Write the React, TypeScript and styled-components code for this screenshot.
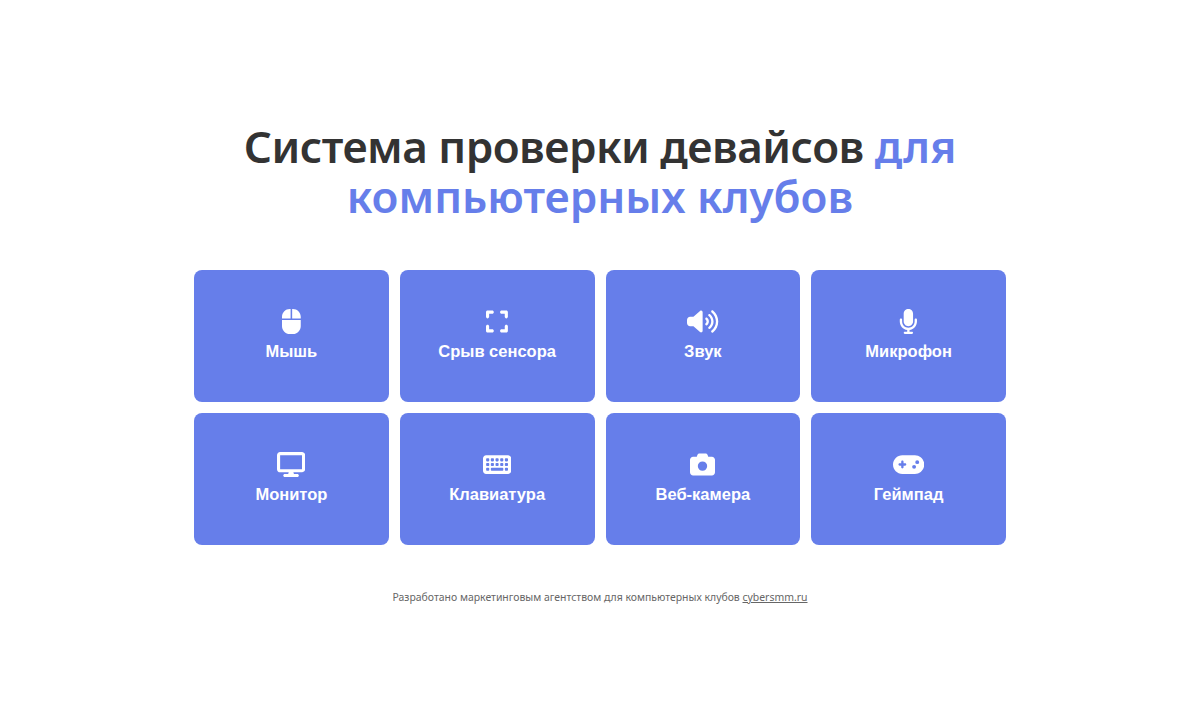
import React from "react";
import styled, { createGlobalStyle } from "styled-components";
import {
  FaComputerMouse,
  FaExpand,
  FaVolumeHigh,
  FaMicrophone,
  FaKeyboard,
  FaCamera,
  FaGamepad,
} from "react-icons/fa6";

const Global = createGlobalStyle`
  html, body { margin: 0; padding: 0; background: #fff; }
  body { font-family: "Noto Sans", "Open Sans", sans-serif; }
`;

const Page = styled.main`
  min-height: 710px;
  display: flex;
  flex-direction: column;
  align-items: center;
  padding-top: 121px;
  box-sizing: border-box;
`;

const Title = styled.h1`
  width: 812px;
  margin: 0 0 49px;
  text-align: center;
  font-family: "Noto Sans", sans-serif;
  font-size: 44px;
  font-weight: 600;
  line-height: 50px;
  color: #333;
`;

const Lead = styled.span`
  letter-spacing: -0.5px;
`;

const Accent = styled.span`
  color: #667eea;
`;

const Grid = styled.div`
  width: 812px;
  display: grid;
  grid-template-columns: repeat(4, 1fr);
  grid-auto-rows: 132px;
  gap: 11px;
`;

const Card = styled.a`
  display: flex;
  flex-direction: column;
  align-items: center;
  justify-content: center;
  gap: 5px;
  border-radius: 8px;
  background: #667eea;
  color: #fff;
  text-decoration: none;
  box-sizing: border-box;
`;

const IconSlot = styled.span<{ $width: number }>`
  height: 25px;
  display: flex;
  align-items: center;
  justify-content: center;

  svg {
    width: ${(p) => p.$width}px;
    height: 25px;
  }
`;

const Label = styled.span`
  font-family: "Liberation Sans", Arial, sans-serif;
  font-size: 16.5px;
  font-weight: 700;
  line-height: 24px;
`;

const Footer = styled.p`
  margin: 44px 0 0;
  font-family: "Noto Sans", sans-serif;
  font-size: 10.45px;
  line-height: 16px;
  color: #666;
  text-align: center;
`;

const FooterLink = styled.a`
  color: #666;
  text-decoration: underline;
`;

const MonitorIcon = () => (
  <svg viewBox="0 0 576 512" fill="currentColor" aria-hidden="true">
    <path d="M64 0C28.7 0 0 28.7 0 64V352c0 35.3 28.7 64 64 64H240l-10.7 32H160c-17.7 0-32 14.3-32 32s14.3 32 32 32H416c17.7 0 32-14.3 32-32s-14.3-32-32-32H346.7L336 416H512c35.3 0 64-28.7 64-64V64c0-35.3-28.7-64-64-64H64zM512 64V352H64V64H512z" />
  </svg>
);

const items: [string, React.ReactNode, number][] = [
  ["Мышь", <FaComputerMouse />, 18.75],
  ["Срыв сенсора", <FaExpand />, 21.875],
  ["Звук", <FaVolumeHigh />, 31.25],
  ["Микрофон", <FaMicrophone />, 18.75],
  ["Монитор", <MonitorIcon />, 28.125],
  ["Клавиатура", <FaKeyboard />, 28.125],
  ["Веб-камера", <FaCamera />, 25],
  ["Геймпад", <FaGamepad />, 31.25],
];

export default function App() {
  return (
    <Page>
      <Global />
      <Title>
        <Lead>Система проверки девайсов </Lead>
        <Accent>для компьютерных клубов</Accent>
      </Title>
      <Grid>
        {items.map(([label, icon, width]) => (
          <Card key={label} href="#">
            <IconSlot $width={width}>{icon}</IconSlot>
            <Label>{label}</Label>
          </Card>
        ))}
      </Grid>
      <Footer>
        Разработано маркетинговым агентством для компьютерных клубов <FooterLink href="#">cybersmm.ru</FooterLink>
      </Footer>
    </Page>
  );
}
